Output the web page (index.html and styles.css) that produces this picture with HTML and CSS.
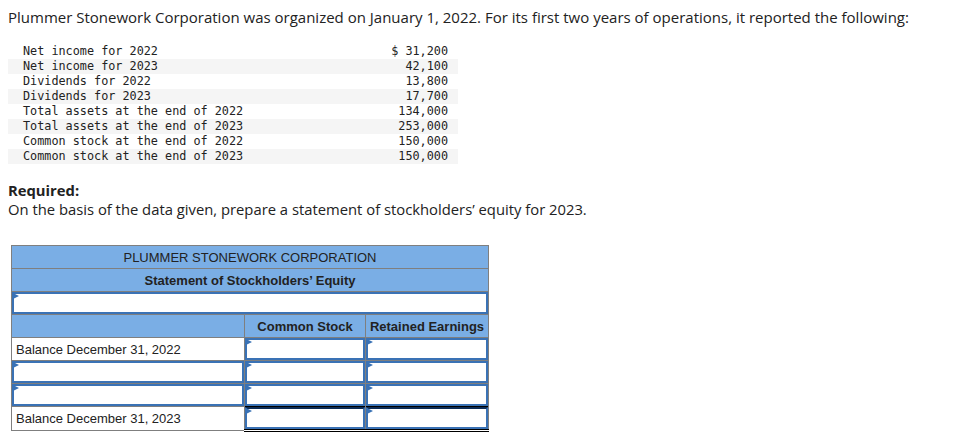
FILE: index.html
```html
<!DOCTYPE html>
<html>
<head>
<meta charset="utf-8">
<link rel="stylesheet" href="styles.css">
</head>
<body>
<p class="intro">Plummer Stonework Corporation was organized on January 1, 2022. For its first two years of operations, it reported the following:</p>
<table class="data">
  <tr><td>Net income for 2022</td><td class="num">$ 31,200</td></tr>
  <tr><td>Net income for 2023</td><td class="num">42,100</td></tr>
  <tr><td>Dividends for 2022</td><td class="num">13,800</td></tr>
  <tr><td>Dividends for 2023</td><td class="num">17,700</td></tr>
  <tr><td>Total assets at the end of 2022</td><td class="num">134,000</td></tr>
  <tr><td>Total assets at the end of 2023</td><td class="num">253,000</td></tr>
  <tr><td>Common stock at the end of 2022</td><td class="num">150,000</td></tr>
  <tr><td>Common stock at the end of 2023</td><td class="num">150,000</td></tr>
</table>
<div class="req">
  <div class="req-title">Required:</div>
  <div>On the basis of the data given, prepare a statement of stockholders’ equity for 2023.</div>
</div>
<table class="stmt">
  <tr class="hd"><td colspan="3" class="h1">PLUMMER STONEWORK CORPORATION</td></tr>
  <tr class="hd"><td colspan="3" class="h2">Statement of Stockholders’ Equity</td></tr>
  <tr><td colspan="3" class="inp"><div class="box"><span class="tri"></span></div></td></tr>
  <tr class="hd"><td class="c1"></td><td class="c2 colh">Common Stock</td><td class="c3 colh">Retained Earnings</td></tr>
  <tr><td class="lbl">Balance December 31, 2022</td><td class="inp"><div class="box"><span class="tri"></span></div></td><td class="inp"><div class="box"><span class="tri"></span></div></td></tr>
  <tr><td class="inp"><div class="box"><span class="tri"></span></div></td><td class="inp"><div class="box"><span class="tri"></span></div></td><td class="inp"><div class="box"><span class="tri"></span></div></td></tr>
  <tr><td class="inp"><div class="box"><span class="tri"></span></div></td><td class="inp"><div class="box"><span class="tri"></span></div></td><td class="inp"><div class="box"><span class="tri"></span></div></td></tr>
  <tr class="last"><td class="lbl">Balance December 31, 2023</td><td class="inp tot"><div class="box"><span class="tri"></span></div></td><td class="inp tot"><div class="box"><span class="tri"></span></div></td></tr>
</table>
</body>
</html>
```
FILE: styles.css
```css
body {
  margin: 8px;
  font-family: "Open Sans", Lato, sans-serif;
  color: #222;
  background: #fff;
}
.intro {
  margin: 0;
  font-size: 15px;
  line-height: 18px;
}
.data {
  margin-top: 18px;
  border-collapse: collapse;
  width: 450px;
  font-family: "DejaVu Sans Mono", monospace;
  font-size: 11.8px;
  color: #222;
}
.data td {
  height: 15px;
  padding: 0 0 0 15px;
  line-height: 15px;
  white-space: pre;
}
.data td.num {
  text-align: right;
  padding: 0 10px 0 0;
}
.data tr:nth-child(even) td {
  background: #f5f5f5;
}
.req {
  margin-top: 17px;
  font-size: 14.8px;
  line-height: 19px;
}
.req-title {
  font-weight: bold;
}
.stmt {
  margin-top: 26px;
  margin-left: 3px;
  border-collapse: collapse;
  width: 478px;
  font-family: "Liberation Sans", Arial, sans-serif;
  font-size: 13px;
  color: #222;
}
.stmt td {
  border: 1px solid #7f7f7f;
  height: 22px;
  padding: 0;
}
.hd td {
  background: #7aaee5;
  text-align: center;
}
.h2, .colh {
  font-weight: bold;
}
.c1 { width: 232px; }
.c2 { width: 120px; }
.lbl {
  padding-left: 4px !important;
  background: #fff;
}
.inp {
  background: #fff;
  position: relative;
}
.box {
  position: relative;
  height: 18px;
  border: 2px solid #3a72b5;
  background: #fff;
}
.tri {
  position: absolute;
  left: -1px;
  top: -1px;
  width: 0;
  height: 0;
  border-top: 3px solid transparent;
  border-bottom: 3px solid transparent;
  border-left: 6px solid #3a72b5;
}
.tot .box {
  border-top: 2px solid #0b2b55;
  box-shadow: 0 -1px 0 #000;
}
.last td.tot {
  border-bottom: 3px double #000;
}
```
